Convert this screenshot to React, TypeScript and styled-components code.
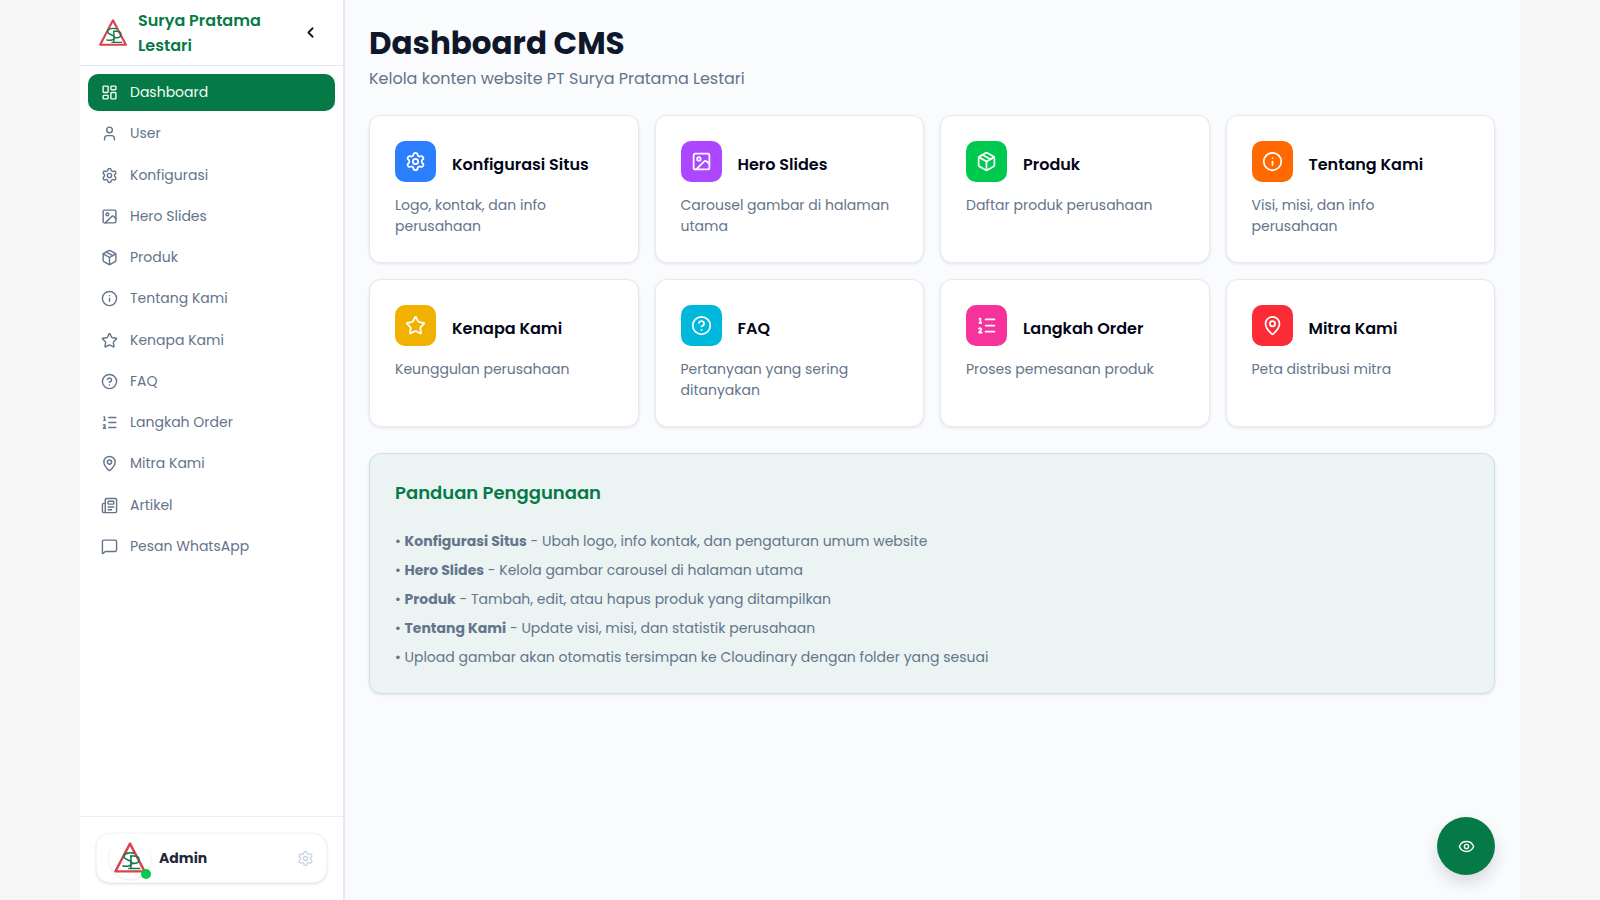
import React from "react";
import styled, { createGlobalStyle } from "styled-components";
import {
  LayoutDashboard, User, Settings, Image, Package, Info, Star, CircleQuestionMark,
  ListOrdered, MapPin, Newspaper, MessageSquare, ChevronLeft, Eye,
} from "lucide-react";

const GlobalStyle = createGlobalStyle`
  *, *::before, *::after { box-sizing: border-box; }
  body {
    margin: 0;
    background: #f6f6f6;
    color: #020617;
    font-family: Poppins, Inter, "Open Sans", sans-serif;
    font-size: 14px;
  }
  h1, h2, h3, p, ul { margin: 0; padding: 0; }
  ul { list-style: none; }
  button { font: inherit; cursor: pointer; }
  a { color: inherit; text-decoration: none; }
`;

const Shell = styled.div`
  display: flex;
  width: 90%;
  min-height: 100vh;
  margin: 0 auto;
  background: #fafbfd;
`;

const Sidebar = styled.aside`
  display: flex;
  flex-direction: column;
  flex: 0 0 265px;
  background: #fff;
  border-right: 2px solid #e6e9ee;
`;

const Brand = styled.header`
  display: flex;
  align-items: center;
  gap: 10px;
  height: 66px;
  padding: 0 20px 0 18px;
  border-bottom: 1px solid #e2e8f0;
`;

const BrandName = styled.strong`
  flex: 1;
  color: #067a46;
  font-size: 16px;
  font-weight: 600;
  line-height: 25px;
`;

const CollapseButton = styled.button`
  display: flex;
  padding: 4px;
  border: 0;
  background: none;
  color: #0f172a;
`;

const Nav = styled.nav`
  flex: 1;
  padding: 8px;
`;

const NavList = styled.ul`
  display: grid;
  grid-auto-rows: 1fr;
  gap: 4px;
  height: 491px;
`;

const NavLink = styled.a<{ $active?: boolean }>`
  display: flex;
  align-items: center;
  gap: 12px;
  height: 100%;
  padding: 0 13px;
  border-radius: 10px;
  background: ${(p) => (p.$active ? "#067a46" : "transparent")};
  color: ${(p) => (p.$active ? "#f1faf5" : "#64748b")};
`;

const SidebarFooter = styled.footer`
  padding: 16px 16px 17px;
  border-top: 1px solid #eceff5;
`;

const Account = styled.button`
  display: flex;
  align-items: center;
  gap: 8px;
  width: 100%;
  height: 50px;
  padding: 0 12px;
  border: 1px solid #f5f6f8;
  border-radius: 14px;
  background: #fff;
  box-shadow: 0 1px 3px rgba(15, 23, 42, 0.14);
  color: #cbd5e1;
`;

const Avatar = styled.span`
  position: relative;
  display: grid;
  place-items: center;
  width: 42px;
  height: 42px;
  border-radius: 50%;
  box-shadow: 0 1px 3px rgba(15, 23, 42, 0.1);
`;

const OnlineDot = styled.span`
  position: absolute;
  right: 0;
  bottom: 0;
  width: 10px;
  height: 10px;
  border-radius: 50%;
  background: #05c951;
`;

const AccountName = styled.span`
  flex: 1;
  color: #1e293b;
  font-weight: 700;
  text-align: left;
`;

const Main = styled.main`
  flex: 1;
  min-width: 0;
  padding: 25px 25px 25px 24px;
`;

const Title = styled.h1`
  color: #0f172a;
  font-size: 31px;
  font-weight: 700;
  line-height: 37px;
`;

const Subtitle = styled.p`
  margin-top: 4px;
  color: #64748b;
  font-size: 16px;
  line-height: 25px;
`;

const Cards = styled.section`
  display: grid;
  grid-template-columns: repeat(4, minmax(0, 1fr));
  gap: 16px;
  margin: 24px 0 26px;
`;

const Card = styled.a`
  min-height: 148px;
  padding: 25px;
  border: 1px solid #e6eaf0;
  border-radius: 12px;
  background: #fff;
  box-shadow: 0 1px 3px rgba(15, 23, 42, 0.1);
`;

const CardHead = styled.div`
  display: flex;
  align-items: center;
  gap: 16px;
`;

const IconTile = styled.span<{ $color: string }>`
  display: grid;
  place-items: center;
  flex: none;
  width: 41px;
  height: 41px;
  border-radius: 10px;
  background: ${(p) => p.$color};
  color: #fff;
`;

const CardTitle = styled.h2`
  padding-top: 5px;
  font-size: 16px;
  font-weight: 600;
  line-height: 25px;
`;

const CardText = styled.p`
  margin-top: 13px;
  padding-right: 7px;
  color: #64748b;
  line-height: 21px;
`;

const Guide = styled.section`
  padding: 25px;
  border: 1px solid #cfe2dc;
  border-radius: 12px;
  background: #ebf4f3;
  box-shadow: 0 1px 3px rgba(15, 23, 42, 0.1);
`;

const GuideTitle = styled.h2`
  color: #067a46;
  font-size: 18px;
  font-weight: 600;
  line-height: 28px;
`;

const GuideList = styled.ul`
  display: grid;
  gap: 8px;
  margin-top: 24px;
  color: #64748b;
  line-height: 21px;

  strong { font-weight: 700; }
`;

const PreviewButton = styled.button`
  position: fixed;
  right: calc(5% + 25px);
  bottom: 25px;
  display: grid;
  place-items: center;
  width: 58px;
  height: 58px;
  border: 0;
  border-radius: 50%;
  background: #067a46;
  color: #fff;
  box-shadow: 0 8px 16px rgba(15, 23, 42, 0.14);
`;

const Logo = ({ size }: { size: number }) => (
  <svg width={size} height={size} viewBox="0 0 28 28" fill="none" aria-hidden="true">
    <path d="M14 2.2 26 25H2Z" stroke="#d9434e" strokeWidth="2" strokeLinejoin="round" />
    <path d="M17.5 10c-3.5-.8-8.5-.2-8.500 2.800 0 3.200 6.500 2.400 6.500 5.300 0 2.500-4.400 3.200-7.800 2.300" stroke="#16794a" strokeWidth="1.3" />
    <path d="M14.800 11.800v10.900M14 12.400h3c6 0 6 6 0 6h-2.200M12.500 22.700h10" stroke="#16794a" strokeWidth="1.3" />
  </svg>
);

const navItems = [
  { label: "Dashboard", icon: LayoutDashboard },
  { label: "User", icon: User },
  { label: "Konfigurasi", icon: Settings },
  { label: "Hero Slides", icon: Image },
  { label: "Produk", icon: Package },
  { label: "Tentang Kami", icon: Info },
  { label: "Kenapa Kami", icon: Star },
  { label: "FAQ", icon: CircleQuestionMark },
  { label: "Langkah Order", icon: ListOrdered },
  { label: "Mitra Kami", icon: MapPin },
  { label: "Artikel", icon: Newspaper },
  { label: "Pesan WhatsApp", icon: MessageSquare },
];

const cards = [
  { title: "Konfigurasi Situs", text: "Logo, kontak, dan info perusahaan", icon: Settings, color: "#2b7fff" },
  { title: "Hero Slides", text: "Carousel gambar di halaman utama", icon: Image, color: "#ad46ff" },
  { title: "Produk", text: "Daftar produk perusahaan", icon: Package, color: "#00c950" },
  { title: "Tentang Kami", text: "Visi, misi, dan info perusahaan", icon: Info, color: "#ff6900" },
  { title: "Kenapa Kami", text: "Keunggulan perusahaan", icon: Star, color: "#f0b100" },
  { title: "FAQ", text: "Pertanyaan yang sering ditanyakan", icon: CircleQuestionMark, color: "#00b8db" },
  { title: "Langkah Order", text: "Proses pemesanan produk", icon: ListOrdered, color: "#f6339a" },
  { title: "Mitra Kami", text: "Peta distribusi mitra", icon: MapPin, color: "#fb2c36" },
];

const tips = [
  { name: "Konfigurasi Situs", text: "Ubah logo, info kontak, dan pengaturan umum website" },
  { name: "Hero Slides", text: "Kelola gambar carousel di halaman utama" },
  { name: "Produk", text: "Tambah, edit, atau hapus produk yang ditampilkan" },
  { name: "Tentang Kami", text: "Update visi, misi, dan statistik perusahaan" },
];

export default function App() {
  return (
    <>
      <GlobalStyle />
      <Shell>
        <Sidebar>
          <Brand>
            <Logo size={30} />
            <BrandName>Surya Pratama Lestari</BrandName>
            <CollapseButton aria-label="Tutup sidebar"><ChevronLeft size={17} strokeWidth={2.5} /></CollapseButton>
          </Brand>
          <Nav>
            <NavList>
              {navItems.map(({ label, icon: Icon }, i) => (
                <li key={label}>
                  <NavLink href="#" $active={i === 0}><Icon size={17} />{label}</NavLink>
                </li>
              ))}
            </NavList>
          </Nav>
          <SidebarFooter>
            <Account>
              <Avatar><Logo size={34} /><OnlineDot /></Avatar>
              <AccountName>Admin</AccountName>
              <Settings size={17} />
            </Account>
          </SidebarFooter>
        </Sidebar>
        <Main>
          <Title>Dashboard CMS</Title>
          <Subtitle>Kelola konten website PT Surya Pratama Lestari</Subtitle>
          <Cards>
            {cards.map(({ title, text, icon: Icon, color }) => (
              <Card key={title} href="#">
                <CardHead>
                  <IconTile $color={color}><Icon size={21} /></IconTile>
                  <CardTitle>{title}</CardTitle>
                </CardHead>
                <CardText>{text}</CardText>
              </Card>
            ))}
          </Cards>
          <Guide>
            <GuideTitle>Panduan Penggunaan</GuideTitle>
            <GuideList>
              {tips.map(({ name, text }) => (
                <li key={name}>• <strong>{name}</strong> - {text}</li>
              ))}
              <li>• Upload gambar akan otomatis tersimpan ke Cloudinary dengan folder yang sesuai</li>
            </GuideList>
          </Guide>
        </Main>
      </Shell>
      <PreviewButton aria-label="Lihat website"><Eye size={17} /></PreviewButton>
    </>
  );
}
